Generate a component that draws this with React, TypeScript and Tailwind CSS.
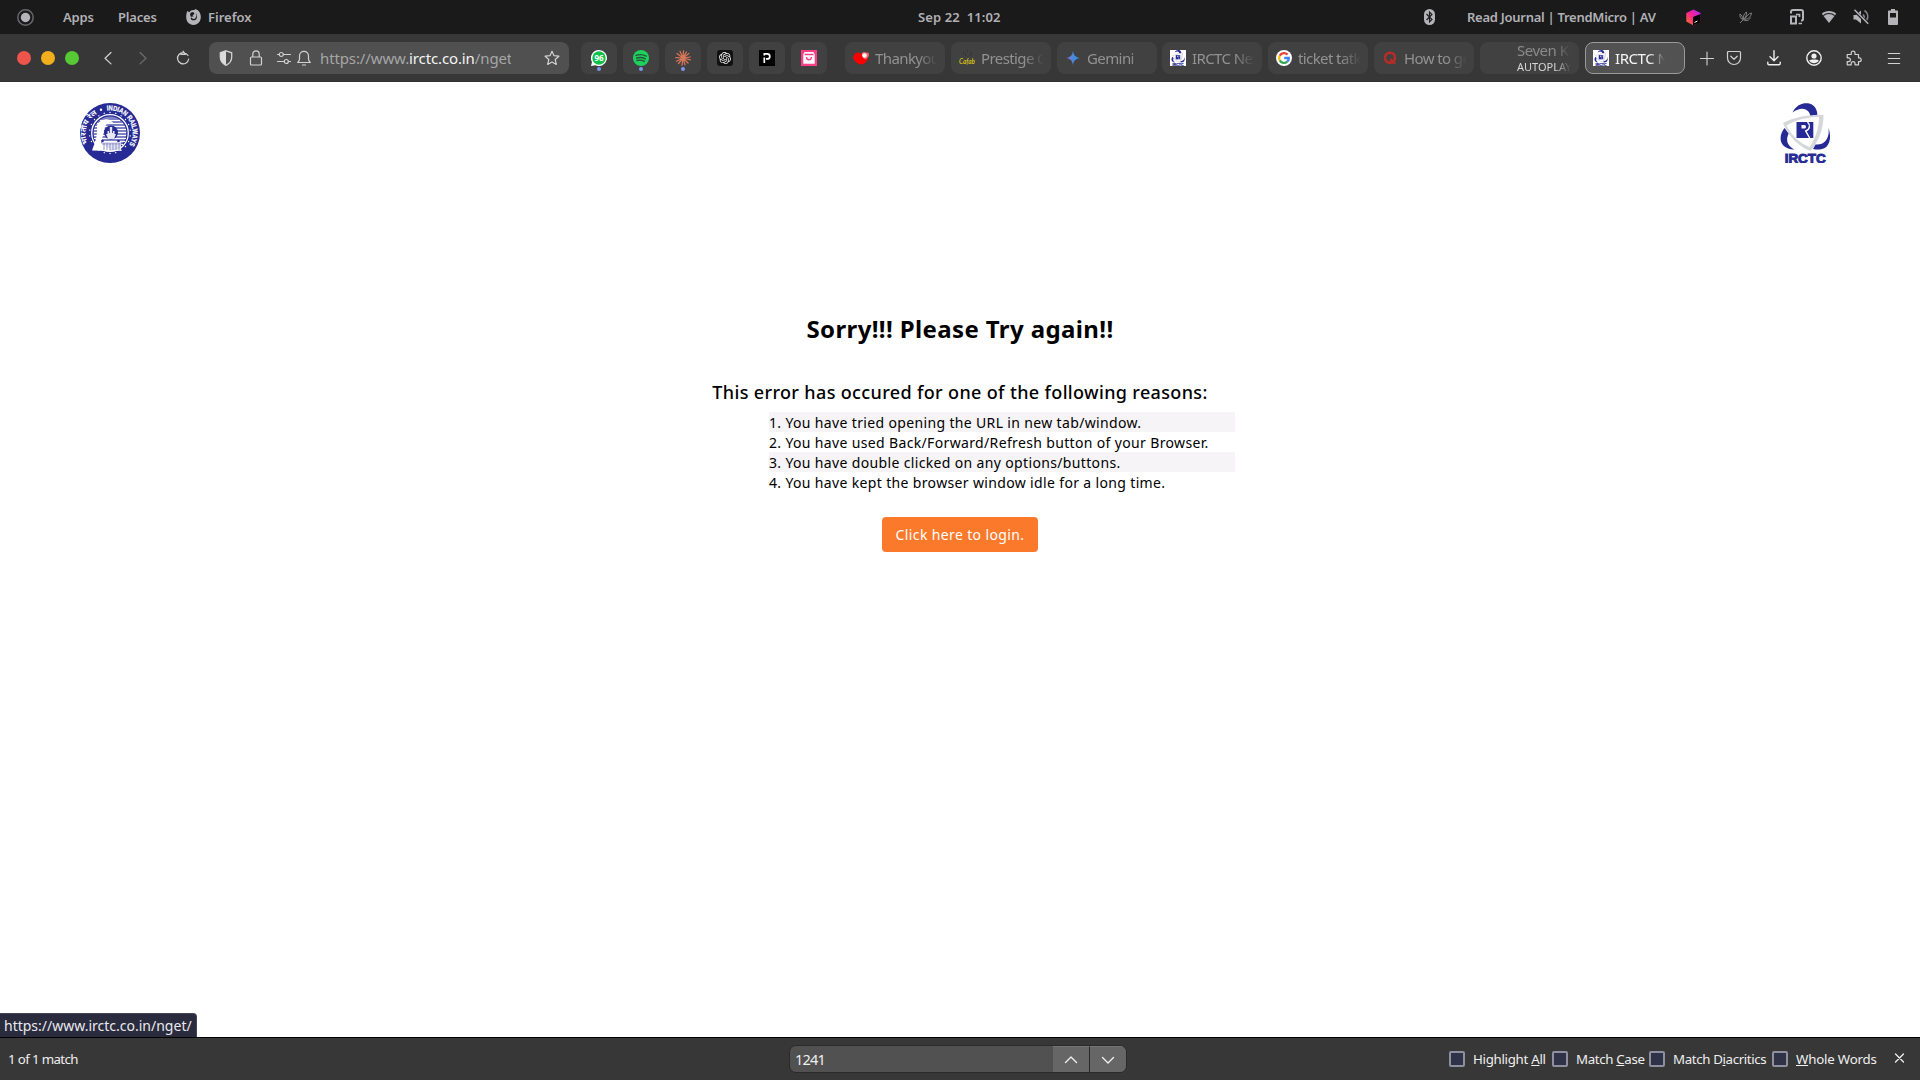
import React from "react";
import { SiOpenai } from "react-icons/si";

function IrctcLogo({ className }: { className: string }) {
  return (
    <svg className={className} viewBox="0 0 50 60">
      <g fill="#262a94">
        <path d="M12.500 9.500C16 2 22-.3 28 .2c6 .8 9.500 6 9.300 11.600L30.500 13C29 6 22 2.500 12.500 9.500Z" />
        <path d="M4.500 25C-2 33-1.500 46 14.500 46.500 7 43 5.500 37 8.700 30.500Z" />
        <path d="M48.500 25c3.500 10 1 20-7.500 21.300-3 .5-6 .2-8-.3l2.500-4.500C44 42.500 50 36 48.500 25Z" />
      </g>
      <path fill="#d6d7da" fillRule="evenodd" d="M3 20C15 13.500 30 11.500 43.500 12 43.500 26 39 38 30.500 48 19 44 8 33 3 20Zm3.500 2.500C11 32 20 40.500 29.500 44 36 35 39 24 39 13.800 28 14 16 17 6.500 22.500Z" />
      <path fill="#262a94" d="M16.500 19h16.800v16H16.500Z" />
      <path fill="#fff" d="M21.500 22h2.800c2.200 0 2.200 3.600 0 3.600h-2.800Z" />
      <path fill="none" stroke="#fff" strokeWidth="1.400" d="M27.500 19c3.200 3 2.300 7.500-1.800 9l4 7" />
      <text x="4.700" y="59.800" fontFamily="Liberation Sans, Arial, sans-serif" fontWeight="700" fontSize="12.800" textLength="41" lengthAdjust="spacingAndGlyphs" fill="#262a94" stroke="#262a94" strokeWidth=".9">IRCTC</text>
    </svg>
  );
}

function RailwaysLogo() {
  const rays = Array.from({ length: 22 }, (_, i) => (i * 360) / 22);
  return (
    <svg className="h-[60px] w-[60px]" viewBox="0 0 60 60">
      <defs>
        <path id="arcRight" d="M27 7.500A22.700 22.700 0 0 1 45 47" />
        <path id="arcLeft" d="M8 40.500A22.800 22.800 0 0 1 21 9" />
      </defs>
      <circle cx="30" cy="30" r="30" fill="#262a94" />
      {rays.map((r) => (
        <circle key={r} cx="30" cy="9.500" r=".7" fill="#fff" transform={`rotate(${r} 30 30)`} />
      ))}
      <circle cx="30" cy="30" r="18.300" fill="#262a94" stroke="#fff" strokeWidth="1.300" />
      <circle cx="30" cy="30" r="16.500" fill="#7f82c2" />
      <path stroke="#fff" strokeWidth="1.100" d="M20 17.500h20M17 20.500h26M15 23.500h30M14 26.500h32M14 29.500h32M14 32.500h32M14 35.500h32M15 38.500h30M18 41.500h25" />
      <path fill="#fff" d="M17 22c4-7 13-8 17-1-7-4-9 2-10 7l-3 12 9 6-1 2-17-.5c2-6 6-12.500 5-25.500Z" />
      <circle cx="31" cy="29.500" r="7" fill="#262a94" />
      <path fill="#e8e8f4" d="M26 31h1.500v-3H29v2h.800v-6h2.400v6h.800v-2h1.500v3H36l-2 5h-6Z" />
      <path fill="#fff" d="M22 38h19v10H22Z" opacity=".8" />
      <path stroke="#6b6eb8" strokeWidth=".7" d="M24 40v7M27 40v7M30 40v7M33 40v7M36 40v7M39 40v7M22 41h20" />
      <circle cx="22.500" cy="38" r="1.300" fill="#262a94" />
      <circle cx="38.500" cy="38" r="1.300" fill="#262a94" />
      <circle cx="21" cy="6.800" r="1.200" fill="#fff" />
      <text fill="#fff" stroke="#fff" strokeWidth=".25" fontFamily="Liberation Sans, Arial, sans-serif" fontWeight="700" fontSize="7">
        <textPath href="#arcRight" textLength="51" lengthAdjust="spacingAndGlyphs">INDIAN RAILWAYS</textPath>
      </text>
      <text fill="#fff" fontFamily="Noto Sans, sans-serif" fontWeight="700" fontSize="7.500">
        <textPath href="#arcLeft" textLength="34">भारतीय रेल</textPath>
      </text>
    </svg>
  );
}

function Line({ d, className, w = 1.2 }: { d: string; className: string; w?: number }) {
  return (
    <svg className={className} viewBox="0 0 16 16" fill="none" stroke="currentColor" strokeWidth={w} strokeLinecap="round" strokeLinejoin="round">
      <path d={d} />
    </svg>
  );
}

function TopBar() {
  return (
    <div className="grid h-[34px] grid-cols-[918px_506px_1fr] items-center bg-[#1a1a1a] text-[13px] font-semibold text-[#b1b1b5]">
      <div className="flex items-center pl-[17px]">
        <svg className="h-[17px] w-[17px]" viewBox="0 0 17 17">
          <circle cx="8.500" cy="8.500" r="7.700" fill="none" stroke="#67676b" strokeWidth="1.500" />
          <circle cx="8.500" cy="8.500" r="4.700" fill="#b5b5b9" />
        </svg>
        <span className="mt-px ml-[29px] w-[55px] tracking-[-0.15px]">Apps</span>
        <span className="mt-px w-[68px] tracking-[-0.2px]">Places</span>
        <svg className="h-4 w-[15px]" viewBox="0 0 15 16">
          <path fill="#b5b5b9" d="M1.300 2 3.400 3.300C4.500 1.300 6 .7 8.500 1l1-.9c3.500 1.300 5.300 4.300 5.300 7.700C14.800 12.500 12 16 7.500 16 3 16 .2 12.500.2 8.300c0-2.500.3-4.300 1.100-6.300Z" />
          <path fill="#1a1a1a" d="M4.500 3.800 7.300 3 8.500 5l-2 1.300 1.200 1.200-2.200-.1L4.700 9.800c1.300 2.200 4.800 2 6-.4.600-2.300 0-4.300-1.500-6.400C10.500 5 10.700 7 9.500 9c-.8 1-2 1.200-3.200.4C4.200 8 3.800 5.800 4.500 3.800Z" />
        </svg>
        <span className="mt-px ml-[7px] tracking-[0px]">Firefox</span>
      </div>
      <div className="mt-px tracking-[0.1px] whitespace-pre">Sep 22  11:02</div>
      <div className="flex items-center">
        <svg className="h-4 w-[11px]" viewBox="0 0 11 16">
          <rect width="11" height="16" rx="5.500" fill="#b5b5b9" />
          <path d="m2.500 5 5.500 5.500L5.500 13V3L8 5.500 2.500 11" fill="none" stroke="#1a1a1a" strokeWidth="1.100" />
        </svg>
        <span className="mt-px ml-8 w-[220px] tracking-[-0.27px] whitespace-nowrap">Read Journal | TrendMicro | AV</span>
        <svg className="-ml-px h-[17px] w-[15px]" viewBox="0 0 15 17">
          <defs>
            <linearGradient id="cube" x1="1" y1="0" x2="0" y2="1">
              <stop offset="0" stopColor="#a328ff" />
              <stop offset=".5" stopColor="#fb218e" />
              <stop offset="1" stopColor="#ff7c20" />
            </linearGradient>
          </defs>
          <path d="M7.500.5 14.500 4v8.500L7.500 16.500.3 12.500V4Z" fill="url(#cube)" />
          <path d="m7 8 7.500-3v8L7 16.500Z" />
          <path d="m8.500 13.500 3-1.500" stroke="#fff" />
        </svg>
        <svg className="ml-[38px] h-[14px] w-[13px]" viewBox="0 0 13 14" fill="none" stroke="#88888b" strokeWidth=".9">
          <path d="M1 13 4.500 9.500M1 4c1.800 1.200 2.500 3 2.500 5.500C1.500 8.500.5 6.500 1 4ZM7.500 2c.3 3-.8 5.500-3 7.200C4 6.500 5 3.500 7.500 2Zm5 1c-.3 3-2.500 5.800-7 6.500M12.500 3C9.500 3.500 7.500 6 5.500 9.500M11.500 7.500c-1 2.500-3.500 4-7 2.500" />
        </svg>
        <svg className="ml-[38px] h-4 w-[15px]" viewBox="0 0 15 16" fill="none" stroke="#b5b5b9" strokeWidth="2">
          <path d="M1 4.500V3q0-2 2-2h8q2 0 2 2v7q0 1.500-1.500 1.500H11" />
          <path d="M1 7.500h5v7H1Z" />
          <path d="M6 5.500h3.500V8M8.500 14.500H12" strokeWidth="1.700" />
        </svg>
        <svg className="ml-4 h-[14px] w-4" viewBox="0 0 16 14">
          <path d="M8 1C5 1 2.500 2 .8 3.700L8 13l7.200-9.300C13.500 2 11 1 8 1Z" fill="#b5b5b9" />
          <path d="M2.300 5.600c3-2.800 8.400-2.800 11.400 0" fill="none" stroke="#1a1a1a" strokeWidth="1.200" />
        </svg>
        <svg className="ml-4 h-4 w-4" viewBox="0 0 16 16">
          <path d="M.5 6H3l5-4.500v13L3 10.500H.5Z" fill="#b5b5b9" />
          <path d="M10 5.500c1.300 1.300 1.300 3 .8 4M11.500 1.500c3.500 2.500 4 6.500 2.300 9.500" fill="none" stroke="#85858a" strokeWidth="1.600" />
          <path d="m1 1 14 14" stroke="#1a1a1a" strokeWidth="3" />
          <path d="m1.500.8 13.700 14" stroke="#b5b5b9" strokeWidth="1.500" />
        </svg>
        <svg className="ml-[19px] h-4 w-[10px]" viewBox="0 0 10 16">
          <path d="M3 0h4v1.500h2.200q.8 0 .8.800V15q0 1-1 1H1q-1 0-1-1V2.300q0-.8.800-.8H3ZM2 4v4.500h6V4Z" fillRule="evenodd" fill="#b5b5b9" />
        </svg>
      </div>
    </div>
  );
}

function Pinned({ children, dot }: { children: React.ReactNode; dot?: boolean }) {
  return (
    <div className="relative flex h-8 w-9 items-center justify-center rounded-[7px] bg-[#414141]">
      {children}
      {dot && <span className="absolute bottom-[3px] left-4 h-1 w-1 rounded-full bg-[#7b96ee]" />}
    </div>
  );
}

function Tab({ icon, title, className = "" }: { icon: React.ReactNode; title: string; className?: string }) {
  return (
    <div className={`flex h-8 w-[100px] shrink-0 items-center rounded-[8px] bg-[#414141] pl-2 ${className}`}>
      {icon}
      <span className="mt-px ml-[6px] w-[63px] overflow-hidden text-[15px] tracking-[-0.6px] whitespace-nowrap text-[#929292] [mask-image:linear-gradient(to_right,black_68%,transparent)]">
        {title}
      </span>
    </div>
  );
}

function NavBar() {
  return (
    <div className="flex h-12 items-center border-b border-[#303030] bg-[#373737] pl-[17px] text-[#d2d2d2]">
      <div className="flex gap-[10px]">
        <span className="h-[14px] w-[14px] rounded-full bg-[#ec544c]" />
        <span className="h-[14px] w-[14px] rounded-full bg-[#f2ae1c]" />
        <span className="h-[14px] w-[14px] rounded-full bg-[#57c935]" />
      </div>
      <Line className="ml-[21px] h-4 w-4" d="m11 2.500-6 5.700 6 5.700" w={1.2} />
      <Line className="ml-[19px] h-4 w-4 text-[#6e6e6e]" d="m5 2.500 6 5.700-6 5.700" w={1.2} />
      <Line className="ml-[24px] h-4 w-4" d="M13 5.500A5.600 5.600 0 1 0 13.700 9M6 4.300h4.500L8 1.200" w={1.2} />
      <div className="ml-[18px] flex h-8 w-[360px] items-center rounded-[8px] bg-[#505050] pl-[9px]">
        <svg className="h-4 w-4" viewBox="0 0 16 16">
          <path d="m8 .8 5.700 2V7c0 4-2.300 6.700-5.700 8.300C4.600 13.700 2.300 11 2.300 7V2.800Z" fill="none" stroke="#d2d2d2" strokeWidth="1.300" />
          <path d="M8 1v14C4.600 13.500 2.500 11 2.500 7V3Z" fill="#dcdcdc" />
        </svg>
        <Line className="ml-[14px] h-4 w-4" d="M3.500 7h9q1 0 1 1v6q0 1-1 1h-9q-1 0-1-1V8q0-1 1-1ZM4.800 7V4a3.200 3.200 0 0 1 6.400 0v3" />
        <Line className="ml-[12px] h-4 w-4" d="M1.500 4.500H3M7.500 4.500h7M1.500 11.500h6M12.500 11.500h2M7.300 4.500a2 2 0 1 1-4 0 2 2 0 0 1 4 0ZM12.300 11.500a2 2 0 1 1-4 0 2 2 0 0 1 4 0Z" />
        <Line className="ml-1 h-4 w-4" d="M1.700 12.500h12.600c-1.300-1.300-1.800-2-1.800-3.500V5.800a4.500 4.500 0 0 0-9 0V9c0 1.500-.5 2.200-1.800 3.500ZM6.500 15h3" />
        <div className="mt-px ml-[8px] w-[191px] overflow-hidden text-[15px] tracking-[-0.12px] whitespace-nowrap text-[#a6a6a6]">
          https://www.<span className="text-[#f4f4f4]">irctc.co.in</span>/nget/
        </div>
        <Line className="ml-[33px] h-4 w-4" d="m8 1.200 2 4.500 4.900.5-3.700 3.300 1.100 4.900L8 11.900l-4.300 2.500 1.100-4.900L1.100 6.200 6 5.700Z" />
      </div>
      <div className="ml-3 flex gap-[6px]">
        <Pinned dot>
          <svg className="h-4 w-4" viewBox="0 0 16 16">
            <path d="M8 0a8 8 0 1 1-3.500 15.200L0 16l1-4A8 8 0 0 1 8 0Z" fill="#fff" />
            <circle cx="8" cy="8" r="6.700" fill="#12c14a" />
            <text x="8" y="11" fontFamily="Noto Sans, sans-serif" fontWeight="700" fontSize="8" textAnchor="middle" fill="#fff">96</text>
          </svg>
        </Pinned>
        <Pinned dot>
          <svg className="h-4 w-4" viewBox="0 0 16 16">
            <circle cx="8" cy="8" r="8" fill="#1ed15f" />
            <path d="M3 5.300c4-1.200 7.500-.7 10.200.8M3.500 8c3.300-1 6.300-.6 8.800.8M4 10.500c2.800-.7 5.200-.4 7.300.8" fill="none" stroke="#28503a" strokeWidth="1.400" strokeLinecap="round" />
          </svg>
        </Pinned>
        <Pinned dot>
          <svg className="h-4 w-4" viewBox="0 0 16 16" stroke="#d97757" strokeWidth="1.250" strokeLinecap="round">
            <path d="M8 8 8.500.8M8 8l3.300-6M8 8l5.800-4.500M8 8l7.200-1M8 8l7.300 1.800M8 8l5 5M8 8l2 6.800M8 8l-1 7.200M8 8l-4.500 5.500M8 8 1.500 11.300M8 8 .8 7.700M8 8 2 3.500M8 8 5 1.300" />
          </svg>
        </Pinned>
        <Pinned>
          <span className="flex h-4 w-4 items-center justify-center rounded-[3px] bg-[#111]">
            <SiOpenai className="h-3 w-3 text-[#f0f0f0]" />
          </span>
        </Pinned>
        <Pinned>
          <svg className="h-4 w-4" viewBox="0 0 16 16">
            <rect width="16" height="16" fill="#000" />
            <path d="M5.300 13V7.500M5.300 5.500V3.900h3a2.500 2.500 0 0 1 0 5H7" fill="none" stroke="#fff" strokeWidth="1.700" />
          </svg>
        </Pinned>
        <Pinned>
          <svg className="h-4 w-4" viewBox="0 0 16 16">
            <rect width="16" height="16" fill="#fb3f86" />
            <path d="M3.500 2h9l1.200 2.500v9.300H2.300V4.500Z" fill="#fff" />
            <path d="M3.500 4.500h9M5.500 7a2.500 2.700 0 0 0 5 0" fill="none" stroke="#fb3f86" strokeWidth="1.400" />
          </svg>
        </Pinned>
      </div>
      <div className="ml-[18px] flex gap-[6px]">
        <Tab
          title="Thankyou"
          icon={
            <svg className="h-4 w-4" viewBox="0 0 16 16">
              <path d="M1.500 4C3 2 6 2 8 3.500L15 8c0 3-4 6.500-7 6.500S0 10 0 7.500Z" fill="#f80000" />
              <path d="M9 3c1.500-1.700 3-1.200 4-.2 1.500-1 3 0 3 1.700 0 2.500-2 4-4 5C10 8 8 5 9 3Z" fill="#f66" />
              <circle cx="11.500" cy="5.500" r="2.200" fill="#fff" />
            </svg>
          }
        />
        <Tab
          title="Prestige Caf"
          icon={
            <svg className="h-4 w-4" viewBox="0 0 16 16">
              <path d="M4 3h1M8 1h1M12 3h1M6 5h1M11 5h1" stroke="#26261a" />
              <text x="0" y="13.500" fontFamily="Lato, sans-serif" fontStyle="italic" fontWeight="700" fontSize="8" textLength="16" lengthAdjust="spacingAndGlyphs" fill="#cdbc18">Cafab</text>
            </svg>
          }
        />
        <Tab
          title="Gemini"
          icon={
            <svg className="h-4 w-4" viewBox="0 0 16 16">
              <defs>
                <linearGradient id="spark">
                  <stop offset="0" stopColor="#9a70c8" />
                  <stop offset=".5" stopColor="#4a87e0" />
                  <stop offset="1" stopColor="#27a0e8" />
                </linearGradient>
              </defs>
              <path d="M8 1c.8 4.500 2.500 6.200 7 7-4.500.8-6.200 2.500-7 7-.8-4.500-2.500-6.200-7-7 4.500-.8 6.200-2.500 7-7Z" fill="url(#spark)" />
            </svg>
          }
        />
        <Tab className="-ml-px" title="IRCTC Next" icon={<span className="flex h-4 w-4 justify-center bg-white"><IrctcLogo className="h-4 w-[14px]" /></span>} />
        <Tab
          title="ticket tatkal"
          icon={
            <svg className="h-4 w-4" viewBox="0 0 16 16" fill="none" strokeWidth="2.300">
              <circle cx="8" cy="8" r="8" fill="#fff" />
              <path d="M11.600 4.600A4.900 4.900 0 0 0 3.700 5.700" stroke="#ea4335" />
              <path d="M3.700 5.700a4.900 4.900 0 0 0 0 4.700" stroke="#fbbc05" />
              <path d="M3.700 10.400a4.900 4.900 0 0 0 7.500 1.300" stroke="#34a853" />
              <path d="M11.200 11.700A4.700 4.700 0 0 0 12.800 8H8.200" stroke="#4285f4" />
            </svg>
          }
        />
        <Tab
          title="How to get"
          icon={
            <svg className="h-4 w-4" viewBox="0 0 16 16" fill="none" stroke="#b92b27" strokeWidth="2.600">
              <circle cx="8" cy="7.700" r="5" />
              <path d="M8 9.500c3 0 2.500 4.500 5.500 3.500" strokeWidth="2" />
            </svg>
          }
        />
        <div className="flex h-8 w-[99px] flex-col justify-center rounded-[8px] bg-[#414141] pl-[37px]">
          <span className="w-[54px] overflow-hidden text-[15px] leading-[17px] tracking-[-0.5px] whitespace-nowrap text-[#8a8a8a] [mask-image:linear-gradient(to_right,black_70%,transparent)]">Seven Kings</span>
          <span className="w-[54px] overflow-hidden text-[11px] leading-[15px] whitespace-nowrap text-[#d6d6d6] [mask-image:linear-gradient(to_right,black_70%,transparent)]">AUTOPLAY</span>
        </div>
        <div className="flex h-8 w-[100px] items-center rounded-[8px] border border-[#9a9a9a] bg-[#525252] pl-[7px]">
          <span className="flex h-4 w-4 justify-center bg-white"><IrctcLogo className="h-4 w-[14px]" /></span>
          <span className="mt-px ml-[6px] w-[50px] overflow-hidden text-[15px] tracking-[-0.45px] whitespace-nowrap text-[#f4f4f4] [mask-image:linear-gradient(to_right,black_68%,transparent)]">IRCTC Next</span>
        </div>
      </div>
      <Line className="ml-[14px] h-4 w-4" d="M1.500 8.500h13M8 2v13" w={1.1} />
      <Line className="ml-[11px] h-4 w-4" d="M2.500 1.500h11q1 0 1 1V8a6.500 6.500 0 0 1-13 0V2.500q0-1 1-1ZM4.800 6.200 8 9.300l3.200-3.100" />
      <Line className="ml-6 h-4 w-4 text-[#f0f0f0]" d="M8 .8v9.700M4 6.800l4 3.900 4-3.900M1.800 12.200v1.300q0 1.200 1.200 1.200h10q1.200 0 1.200-1.200v-1.300" w={1.4} />
      <svg className="ml-[24px] h-4 w-4" viewBox="0 0 16 16">
        <circle cx="8" cy="8" r="7.200" fill="none" stroke="#f0f0f0" strokeWidth="1.400" />
        <circle cx="8" cy="6" r="2.600" fill="#f0f0f0" />
        <path d="M3.200 10.500c1-1.300 8.600-1.300 9.600 0-.8 1.700-2.800 2.700-4.800 2.700s-4-1-4.800-2.700Z" fill="#f0f0f0" />
      </svg>
      <Line className="ml-6 h-4 w-4" d="M1.200 4.500h4V3a1.900 1.900 0 0 1 3.800 0v1.500h3.500v3.300h.8a1.900 1.900 0 0 1 0 3.800h-.8v3.200H9v-1.300a1.900 1.900 0 0 0-3.800 0v1.300h-4v-3.200h1.300a1.900 1.900 0 0 0 0-3.800H1.200Z" />
      <Line className="ml-6 h-4 w-4" d="M2.300 3.500h11.400M2.300 8.500h11.400M2.300 13.500h11.400" w={1.1} />
    </div>
  );
}

const reasons = [
  "1. You have tried opening the URL in new tab/window.",
  "2. You have used Back/Forward/Refresh button of your Browser.",
  "3. You have double clicked on any options/buttons.",
  "4. You have kept the browser window idle for a long time.",
];

function Page() {
  return (
    <main className="flex h-[955px] flex-col bg-white text-black">
      <div className="flex justify-between pt-[21px] pr-[90px] pl-20">
        <RailwaysLogo />
        <IrctcLogo className="h-[60px] w-[50px]" />
      </div>
      <div className="mt-[148px] flex flex-col items-center">
        <h1 className="text-[24px] leading-9 font-bold tracking-[0.38px] whitespace-nowrap">Sorry!!! Please Try again!!</h1>
        <h2 className="mt-8 text-[18px] leading-[27px] font-medium tracking-[0.35px] whitespace-nowrap">This error has occured for one of the following reasons:</h2>
        <ol className="mt-[6px] ml-[84px] w-[466px] text-[14px] leading-[22px] tracking-[0.35px]">
          {reasons.map((r) => (
            <li key={r} className="h-5 whitespace-nowrap odd:bg-[#f6f4f6]">{r}</li>
          ))}
        </ol>
        <button className="mt-[25px] h-[35px] w-[156px] rounded-[4px] bg-[#fb792b] text-[14px] tracking-[0.37px] whitespace-nowrap text-white">Click here to login.</button>
      </div>
      <div className="mt-auto flex h-6 w-[197px] items-center rounded-tr-[4px] border-t border-r border-[#44465a] bg-[#2a2b3d] pl-1 text-[14px] whitespace-nowrap text-[#e9e9ee]">
        https://www.irctc.co.in/nget/
      </div>
    </main>
  );
}

function Check({ className, children }: { className: string; children: React.ReactNode }) {
  return (
    <label className={`flex shrink-0 items-center gap-2 whitespace-nowrap ${className}`}>
      <span className="h-4 w-4 shrink-0 rounded-[2px] border-2 border-[#8f8f9f] bg-[#303348]" />
      <span className="mt-px">{children}</span>
    </label>
  );
}

function FindBar() {
  return (
    <div className="flex h-[43px] items-center border-t border-black bg-[#373737] text-[13.300px] tracking-[-0.3px] text-[#efefef]">
      <span className="mt-px w-[789px] pl-2 tracking-[-0.65px]">1 of 1 match</span>
      <div className="flex h-7 w-[338px] items-stretch overflow-hidden rounded-[7px] border border-[#2a2a2a] bg-[#515151]">
        <span className="flex flex-1 items-center pt-px pl-[5px] text-[14.500px] tracking-[-0.8px]">1241</span>
        <span className="flex w-[36px] items-center justify-center border-t border-[#757575] bg-[#666]"><Line className="h-4 w-4" d="m2.500 10.500 5.500-5.500 5.500 5.500" w={1.4} /></span>
        <span className="flex w-[37px] items-center justify-center border-t border-l border-t-[#757575] border-l-[#2a2a2a] bg-[#666]"><Line className="h-4 w-4" d="m2.500 5.500 5.500 5.500 5.500-5.500" w={1.4} /></span>
      </div>
      <Check className="ml-[322px] w-[103px]">Highlight <u>A</u>ll</Check>
      <Check className="w-[97px] tracking-[-0.35px]">Match <u>C</u>ase</Check>
      <Check className="w-[123px] tracking-[-0.37px]">Match D<u>i</u>acritics</Check>
      <Check className="w-[119px] tracking-[-0.2px]"><u>W</u>hole Words</Check>
      <Line className="mb-[2px] h-4 w-4" d="m4.500 4 8 8M12.500 4l-8 8" w={1.3} />
    </div>
  );
}

export default function App() {
  return (
    <div className="flex h-[1080px] w-[1920px] flex-col overflow-hidden font-['Noto_Sans',sans-serif]">
      <TopBar />
      <NavBar />
      <Page />
      <FindBar />
    </div>
  );
}
